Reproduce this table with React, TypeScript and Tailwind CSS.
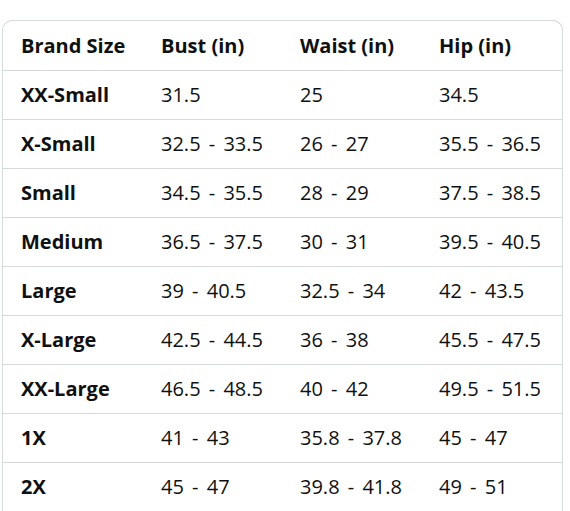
const headers = ["Brand Size", "Bust (in)", "Waist (in)", "Hip (in)"];

const rows: string[][] = [
  ["XX-Small", "31.5", "25", "34.5"],
  ["X-Small", "32.5 - 33.5", "26 - 27", "35.5 - 36.5"],
  ["Small", "34.5 - 35.5", "28 - 29", "37.5 - 38.5"],
  ["Medium", "36.5 - 37.5", "30 - 31", "39.5 - 40.5"],
  ["Large", "39 - 40.5", "32.5 - 34", "42 - 43.5"],
  ["X-Large", "42.5 - 44.5", "36 - 38", "45.5 - 47.5"],
  ["XX-Large", "46.5 - 48.5", "40 - 42", "49.5 - 51.5"],
  ["1X", "41 - 43", "35.8 - 37.8", "45 - 47"],
  ["2X", "45 - 47", "39.8 - 41.8", "49 - 51"],
];

export default function App() {
  return (
    <div className="min-h-screen bg-white pt-[20px] pl-[2px] font-['Open_Sans',sans-serif] text-[#0f1111]">
      <div className="w-[561px] overflow-hidden rounded-t-[10px] border border-b-0 border-[#d5d9d9]">
        <div className="grid h-[49px] grid-cols-[140px_139px_139px_1fr] items-center pl-[18px] text-[20px] leading-none font-bold">
          {headers.map((h) => (
            <div key={h}>{h}</div>
          ))}
        </div>
        {rows.map((r) => (
          <div
            key={r[0]}
            className="grid h-[49px] grid-cols-[140px_139px_139px_1fr] items-center border-t border-[#d5d9d9] pl-[18px] text-[20px] leading-none"
          >
            {r.map((c, i) => (
              <div key={i} className={i === 0 ? "font-bold" : "[word-spacing:3px]"}>
                {c}
              </div>
            ))}
          </div>
        ))}
      </div>
    </div>
  );
}
